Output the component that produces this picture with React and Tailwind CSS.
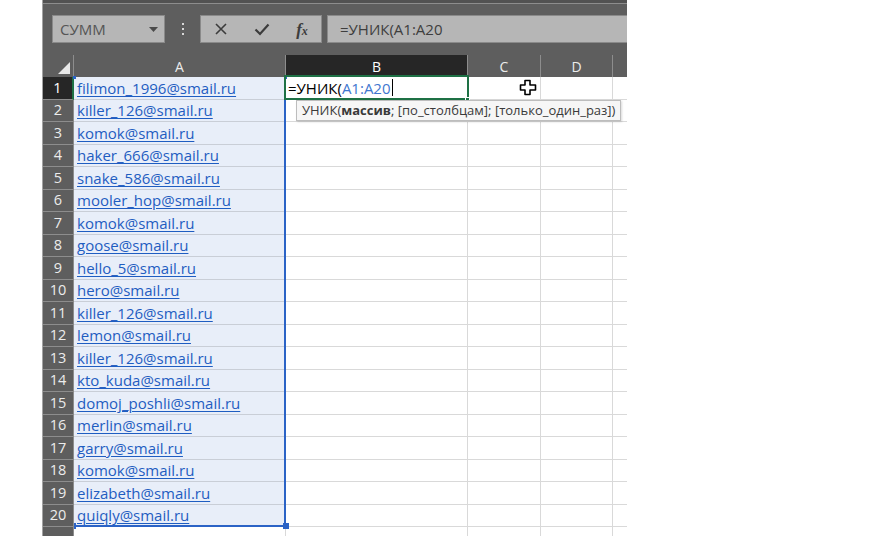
import React from 'react';

const emails = [
  'filimon_1996@smail.ru',
  'killer_126@smail.ru',
  'komok@smail.ru',
  'haker_666@smail.ru',
  'snake_586@smail.ru',
  'mooler_hop@smail.ru',
  'komok@smail.ru',
  'goose@smail.ru',
  'hello_5@smail.ru',
  'hero@smail.ru',
  'killer_126@smail.ru',
  'lemon@smail.ru',
  'killer_126@smail.ru',
  'kto_kuda@smail.ru',
  'domoj_poshli@smail.ru',
  'merlin@smail.ru',
  'garry@smail.ru',
  'komok@smail.ru',
  'elizabeth@smail.ru',
  'quiqly@smail.ru',
];

const columns = [
  { name: 'A', w: 'w-[212px]' },
  { name: 'B', w: 'w-[182px]' },
  { name: 'C', w: 'w-[73px]' },
  { name: 'D', w: 'w-[72px]' },
];

const CrossCursor = () => (
  <svg width="18" height="17" viewBox="0 0 18 17">
    <path
      d="M6 1.5h5v4.5h5.5v5H11v4.5H6V11H1.5V6H6z"
      fill="#fff"
      stroke="#000"
      strokeWidth="1.6"
      strokeLinejoin="round"
    />
  </svg>
);

const App = () => {
  return (
    <div className="w-[889px] h-[536px] overflow-hidden bg-white flex font-['Open_Sans',sans-serif]">
      <div className="w-[43px] shrink-0 border-r border-[#a3a3a3]" />

      <div className="w-[584px] shrink-0 flex flex-col overflow-hidden bg-[#5e5e5e]">
        <div className="h-[3px] shrink-0 bg-[#525252]" />
        <div className="h-px shrink-0 bg-[#8d8d8d]" />

        {/* formula bar */}
        <div className="mt-[11px] h-[28px] shrink-0 flex items-stretch pl-[9px]">
          <div className="w-[113px] bg-[#b6b6b6] border border-[#8a8a8a] flex items-center justify-between pl-[7px] pr-[6px]">
            <span className="text-[15px] text-[#555]">СУММ</span>
            <svg width="9" height="5" viewBox="0 0 9 5">
              <path d="M0 0h9L4.5 5z" fill="#4a4a4a" />
            </svg>
          </div>
          <div className="w-[35px] flex flex-col items-center justify-center gap-[3px]">
            <span className="w-[2px] h-[2px] bg-[#d8d8d8]" />
            <span className="w-[2px] h-[2px] bg-[#d8d8d8]" />
            <span className="w-[2px] h-[2px] bg-[#d8d8d8]" />
          </div>
          <div className="w-[122px] bg-[#b6b6b6] border border-[#8a8a8a] flex items-center">
            <div className="w-[40px] flex justify-center">
              <svg width="12" height="12" viewBox="0 0 12 12">
                <path d="M1 1l10 10M11 1L1 11" stroke="#3c3c3c" strokeWidth="1.6" />
              </svg>
            </div>
            <div className="w-[42px] flex justify-center">
              <svg width="16" height="13" viewBox="0 0 16 13">
                <path d="M1.5 6.5l4.5 4.5L14.5 1.5" stroke="#3c3c3c" strokeWidth="2.2" fill="none" />
              </svg>
            </div>
            <div className="flex-1 flex justify-center">
              <span className="font-['Liberation_Serif',serif] italic font-bold text-[17px] text-[#3c3c3c] leading-none">
                f<span className="text-[12px]">x</span>
              </span>
            </div>
          </div>
          <div className="ml-[5px] flex-1 bg-[#b6b6b6] border border-r-0 border-[#8a8a8a] flex items-center pl-[12px]">
            <span className="text-[15px] text-[#3e3e3e]">=УНИК(A1:A20</span>
          </div>
        </div>

        {/* grid */}
        <div className="mt-[12px] shrink-0 relative flex flex-col">
          <div className="h-[22px] flex shrink-0">
            <div className="w-[31px] border-r border-[#8d8d8d] relative">
              <svg className="absolute right-[3px] bottom-[3px]" width="12" height="12" viewBox="0 0 12 12">
                <path d="M12 0v12H0z" fill="#e8e8e8" />
              </svg>
            </div>
            {columns.map((col) => (
              <div
                key={col.name}
                className={`${col.w} flex items-center justify-center text-[14px] border-r border-[#8d8d8d] ${
                  col.name === 'B' ? 'bg-[#262626] text-white' : 'text-[#ececec]'
                }`}
              >
                {col.name}
              </div>
            ))}
            <div className="flex-1" />
          </div>

          {emails.map((email, i) => (
            <div key={i} className="h-[22.5px] flex shrink-0">
              <div
                className={`w-[31px] flex items-center justify-center text-[14.5px] border-b ${
                  i === 0
                    ? 'bg-[#262626] text-white border-r-2 border-r-[#1e7145] border-b-[#8d8d8d]'
                    : 'text-[#ececec] border-r border-[#8d8d8d]'
                }`}
              >
                {i + 1}
              </div>
              <div className="w-[212px] bg-[#e8eef9] border-b border-r border-[#c9ced7] flex items-center pl-[3px]">
                <span className="text-[15px] text-[#1f5dc1] underline underline-offset-2 whitespace-nowrap">
                  {email}
                </span>
              </div>
              <div className="w-[182px] bg-white border-b border-r border-[#d9d9d9] flex items-center pl-[2px]">
                {i === 0 && (
                  <span className="text-[15px] text-black whitespace-nowrap flex items-center">
                    =УНИК(<span className="text-[#3f77cf]">A1:A20</span>
                    <span className="ml-px w-px h-[17px] bg-black" />
                  </span>
                )}
              </div>
              <div className="w-[73px] bg-white border-b border-r border-[#d9d9d9]" />
              <div className="w-[72px] bg-white border-b border-r border-[#d9d9d9]" />
              <div className="flex-1 bg-white border-b border-[#d9d9d9]" />
            </div>
          ))}

          <div className="h-[22.5px] flex shrink-0">
            <div className="w-[31px] flex justify-center pt-[3px] text-[14.5px] text-[#ececec] border-r border-[#8d8d8d]">
              21
            </div>
            <div className="w-[212px] bg-white border-r border-[#d9d9d9]" />
            <div className="w-[182px] bg-white border-r border-[#d9d9d9]" />
            <div className="w-[73px] bg-white border-r border-[#d9d9d9]" />
            <div className="w-[72px] bg-white border-r border-[#d9d9d9]" />
            <div className="flex-1 bg-white" />
          </div>

          {/* reference range A1:A20 */}
          <div className="absolute left-[31px] top-[22px] w-[212px] h-[450px] border-r-[2px] border-b-[2px] border-[#2b63c6]" />
          <div className="absolute left-[30px] top-[21px] w-[3px] h-[3px] bg-[#2b63c6]" />
          <div className="absolute left-[241px] top-[21px] w-[3px] h-[3px] bg-[#2b63c6]" />
          <div className="absolute left-[31px] top-[468px] w-[2px] h-[6px] bg-[#2b63c6]" />
          <div className="absolute left-[240px] top-[468px] w-[6px] h-[6px] bg-[#2b63c6]" />

          {/* active cell B1 */}
          <div className="absolute left-[241px] top-[20px] w-[185px] h-[25px] border-2 border-[#1e7145]" />
          <div className="absolute left-[422px] top-[42px] w-[5px] h-[5px] bg-[#1e7145] border border-white" />

          {/* function tooltip */}
          <div className="absolute left-[253px] top-[45px] w-[325px] h-[21px] bg-[#f6f6f6] border border-[#bdbdbd] shadow-[1px_1px_2px_rgba(0,0,0,0.15)] flex items-center pl-[5px]">
            <span className="text-[13px] text-[#3a3a3a] whitespace-nowrap">
              УНИК(<span className="font-bold">массив</span>; [по_столбцам]; [только_один_раз])
            </span>
          </div>

          {/* mouse cursor */}
          <div className="absolute left-[476px] top-[24px]">
            <CrossCursor />
          </div>
        </div>
      </div>

      <div className="flex-1 bg-white" />
    </div>
  );
};

export default App;
